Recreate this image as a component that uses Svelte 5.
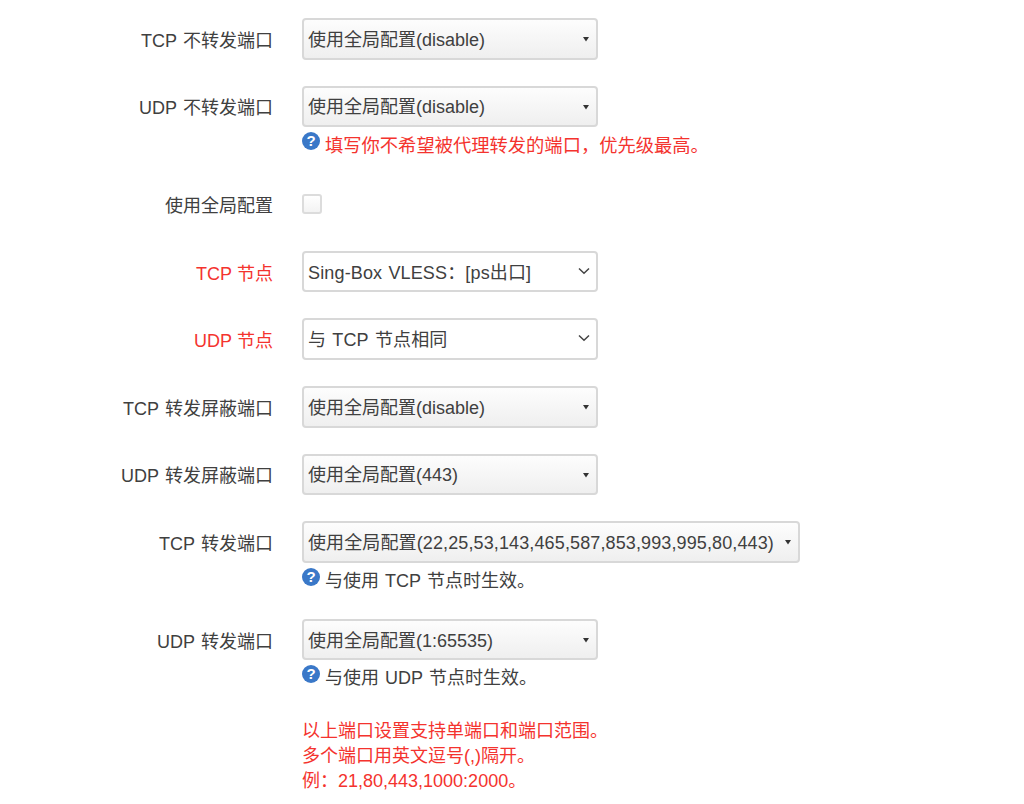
<script lang="ts">
type Row = {
    label: string;
    value?: string;
    red?: boolean;
    native?: boolean;
    wide?: boolean;
    check?: boolean;
    hint?: string;
    hintRed?: boolean;
};

const rows: Row[] = [
    { label: "TCP 不转发端口", value: "使用全局配置(disable)" },
    {
        label: "UDP 不转发端口",
        value: "使用全局配置(disable)",
        hint: "填写你不希望被代理转发的端口，优先级最高。",
        hintRed: true,
    },
    { label: "使用全局配置", check: true },
    { label: "TCP 节点", value: "Sing-Box VLESS：[ps出口]", red: true, native: true },
    { label: "UDP 节点", value: "与 TCP 节点相同", red: true, native: true },
    { label: "TCP 转发屏蔽端口", value: "使用全局配置(disable)" },
    { label: "UDP 转发屏蔽端口", value: "使用全局配置(443)" },
    {
        label: "TCP 转发端口",
        value: "使用全局配置(22,25,53,143,465,587,853,993,995,80,443)",
        wide: true,
        hint: "与使用 TCP 节点时生效。",
    },
    { label: "UDP 转发端口", value: "使用全局配置(1:65535)", hint: "与使用 UDP 节点时生效。" },
];
</script>

<main class="form">
    {#each rows as row}
        <section class="field">
            <div class="line">
                <span class="label" class:red={row.red}>{row.label}</span>
                {#if row.check}
                    <input class="check" type="checkbox" aria-label={row.label} />
                {:else}
                    <div class="select-wrap" class:wide={row.wide}>
                        <select class="select" class:plain={row.native} aria-label={row.label}>
                            <option>{row.value}</option>
                        </select>
                        {#if row.native}
                            <svg class="chevron" width="12" height="8" viewBox="0 0 12 8" aria-hidden="true">
                                <path d="M1 1.5 L6 6.2 L11 1.5" fill="none" stroke="#444" stroke-width="1.5" />
                            </svg>
                        {:else}
                            <svg class="caret" width="6" height="6" viewBox="0 0 6 6" aria-hidden="true">
                                <path d="M0 1 H6 L3 5.5 Z" fill="#333" />
                            </svg>
                        {/if}
                    </div>
                {/if}
            </div>
            {#if row.hint}
                <p class="hint" class:red={row.hintRed}>
                    <svg class="help" width="18" height="18" viewBox="0 0 18 18" aria-hidden="true">
                        <circle cx="9" cy="9" r="9" fill="#3a78c8" />
                        <text x="9" y="14.2" text-anchor="middle" fill="#fff" font-size="15" font-weight="700" font-family="'Liberation Sans', sans-serif">?</text>
                    </svg>
                    <span>{row.hint}</span>
                </p>
            {/if}
        </section>
    {/each}
    <p class="note">
        以上端口设置支持单端口和端口范围。<br />
        多个端口用英文逗号(,)隔开。<br />
        例：21,80,443,1000:2000。
    </p>
</main>

<style>
:global(body) {
    background: #fff;
}

.form {
    padding-top: 18px;
    font-family: "Liberation Sans", "Noto Sans CJK SC", sans-serif;
    font-size: 18px;
    color: #404040;
    word-spacing: 1px;
    font-kerning: none;
}

.field {
    margin-bottom: 26px;
}

.line {
    display: flex;
    align-items: center;
    gap: 29px;
    height: 41.6px;
}

.label {
    width: 273px;
    text-align: right;
    flex: none;
}

.label.red {
    word-spacing: 0;
}

.red {
    color: #f4332e;
}

.select-wrap {
    position: relative;
    width: 296px;
    height: 100%;
}

.select-wrap.wide {
    width: 498px;
}

.select {
    appearance: none;
    display: block;
    width: 100%;
    height: 100%;
    padding: 2px 4px 0;
    box-sizing: border-box;
    border: 2px solid #d8d8d8;
    border-radius: 4px;
    background: linear-gradient(#fdfdfd, #efefef);
    font: inherit;
    font-kerning: none;
    word-spacing: 1px;
    color: inherit;
}

.wide .select {
    letter-spacing: 0.12px;
}

.select.plain {
    background: #fff;
    letter-spacing: 0.15px;
}

.caret {
    position: absolute;
    right: 9px;
    top: 18px;
}

.chevron {
    position: absolute;
    right: 8px;
    top: 16px;
}

.check {
    appearance: none;
    width: 20px;
    height: 20px;
    margin: 0;
    border: 2px solid #dcdcdc;
    border-radius: 3px;
    background: linear-gradient(#ffffff, #f3f3f3);
}

.hint {
    display: flex;
    align-items: flex-start;
    gap: 5px;
    height: 30px;
    margin: 0;
    padding: 4px 0 0 302px;
    box-sizing: border-box;
    line-height: 28px;
}

.hint.red {
    font-size: 18.3px;
    line-height: 30px;
}

.help {
    flex: none;
    margin-top: 1px;
}

.note {
    margin: 0;
    padding: 3px 0 0 302px;
    line-height: 24.8px;
    color: #f4332e;
}
</style>
